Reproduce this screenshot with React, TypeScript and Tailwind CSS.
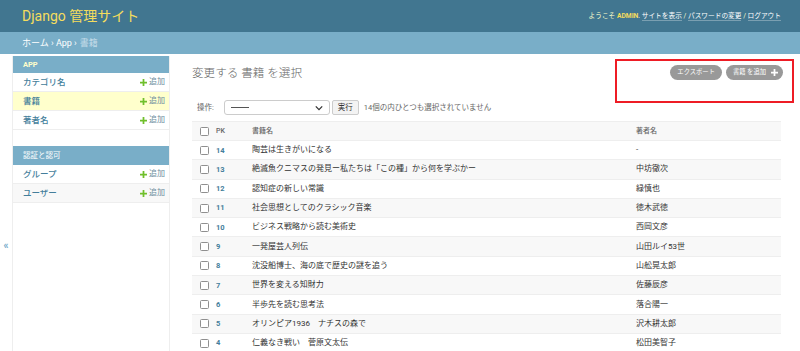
import React from 'react';

const books = [
  { pk: 14, title: '陶芸は生きがいになる', author: '-' },
  { pk: 13, title: '絶滅魚クニマスの発見ー私たちは「この種」から何を学ぶかー', author: '中坊徹次' },
  { pk: 12, title: '認知症の新しい常識', author: '緑慎也' },
  { pk: 11, title: '社会思想としてのクラシック音楽', author: '徳木武徳' },
  { pk: 10, title: 'ビジネス戦略から読む美術史', author: '西岡文彦' },
  { pk: 9, title: '一発屋芸人列伝', author: '山田ルイ53世' },
  { pk: 8, title: '沈没船博士、海の底で歴史の謎を追う', author: '山舩晃太郎' },
  { pk: 7, title: '世界を変える知財力', author: '佐藤辰彦' },
  { pk: 6, title: '半歩先を読む思考法', author: '落合陽一' },
  { pk: 5, title: 'オリンピア1936　ナチスの森で', author: '沢木耕太郎' },
  { pk: 4, title: '仁義なき戦い　菅原文太伝', author: '松田美智子' },
];

const font = { fontFamily: 'Roboto, "Noto Sans CJK JP", sans-serif' };

const GreenPlus = () => (
  <svg width="7" height="7" viewBox="0 0 8 8" className="mr-[2px]">
    <path d="M3 0h2v3h3v2H5v3H3V5H0V3h3z" fill="#70bf2b" />
  </svg>
);

const Checkbox = () => (
  <span className="inline-block w-[9px] h-[9px] border border-[#8f8f8f] rounded-[1.5px] bg-white" />
);

const SidebarRow = ({ label, active, alt }: { label: string; active?: boolean; alt?: boolean }) => (
  <div
    className={`h-[19px] flex items-center justify-between pl-[10px] pr-[4px] border-b border-[#eee] ${
      active ? 'bg-[#ffffcc]' : alt ? 'bg-[#f8f8f8]' : 'bg-white'
    }`}
  >
    <span className="text-[8.5px] text-[#447e9b] font-medium">{label}</span>
    <span className="flex items-center text-[8px] text-[#6d8ea0]">
      <GreenPlus />
      追加
    </span>
  </div>
);

export default function App() {
  return (
    <div className="w-[800px] h-[351px] overflow-hidden bg-white relative" style={font}>
      {/* header */}
      <div className="h-[32px] bg-[#417690] flex items-center justify-between pl-[22px] pr-[19px]">
        <span className="text-[14px] text-[#f5dd5d] leading-none">Django 管理サイト</span>
        <span className="text-[6.7px] text-[#ffc] leading-none">
          ようこそ <b className="text-[#f5dd5d]">ADMIN</b>.{' '}
          <span className="text-white border-b border-white/30">サイトを表示</span> /{' '}
          <span className="text-white border-b border-white/30">パスワードの変更</span> /{' '}
          <span className="text-white border-b border-white/30">ログアウト</span>
        </span>
      </div>

      {/* breadcrumbs */}
      <div className="h-[22px] bg-[#79aec8] flex items-center pl-[22px] text-[9px] text-white leading-none">
        ホーム › App › <span className="ml-[3px] text-[#c4dce8]">書籍</span>
      </div>

      <div className="flex h-[297px] pt-[2px]">
        {/* sidebar toggle */}
        <div className="w-[12px] flex justify-center pt-[185px]">
          <span className="text-[10px] font-bold text-[#70a7c8] leading-none">«</span>
        </div>

        {/* sidebar */}
        <div className="w-[158px] border-l border-r border-[#eee]">
          <div className="mb-[16px]">
            <div className="h-[17px] bg-[#79aec8] flex items-center pl-[10px] text-[7.5px] font-bold text-[#ffffcc]">
              APP
            </div>
            <SidebarRow label="カテゴリ名" />
            <SidebarRow label="書籍" active />
            <SidebarRow label="著者名" />
          </div>
          <div>
            <div className="h-[19px] bg-[#79aec8] flex items-center pl-[10px] text-[7.5px] text-white">
              認証と認可
            </div>
            <SidebarRow label="グループ" />
            <SidebarRow label="ユーザー" alt />
          </div>
        </div>

        {/* content */}
        <div className="flex-1 pl-[22px] pr-[17px]">
          <div className="flex justify-between items-start h-[41px]">
            <h1 className="text-[11.6px] text-[#666] font-light pt-[12px] leading-none">変更する 書籍 を選択</h1>
            <div className="flex gap-[4px] pt-[9px]">
              <span className="h-[15px] px-[7px] rounded-full bg-[#999] text-white text-[6.3px] flex items-center">
                エクスポート
              </span>
              <span className="h-[15px] pl-[7px] pr-[5px] rounded-full bg-[#999] text-white text-[6.3px] flex items-center gap-[5px]">
                書籍 を追加
                <svg width="7" height="7" viewBox="0 0 8 8">
                  <path d="M3 0h2v3h3v2H5v3H3V5H0V3h3z" fill="#fff" />
                </svg>
              </span>
            </div>
          </div>

          {/* actions */}
          <div className="h-[24px] flex items-center text-[7.5px] text-[#666] pl-[5px] pb-[3px]">
            <span className="mr-[10px]">操作:</span>
            <div className="w-[106px] h-[15px] border border-[#ccc] rounded-[3px] flex items-center justify-between px-[6px]">
              <span className="w-[18px] h-px bg-[#555]" />
              <svg width="8" height="6" viewBox="0 0 10 6">
                <path d="M1 1l4 4 4-4" stroke="#333" strokeWidth="1.6" fill="none" />
              </svg>
            </div>
            <span className="ml-[2px] h-[15px] px-[5px] border border-[#ccc] rounded-[2px] bg-[#f3f3f3] text-[#333] flex items-center">
              実行
            </span>
            <span className="ml-[5px]">14個の内ひとつも選択されていません</span>
          </div>

          {/* table */}
          <div className="border-t border-[#eee] mr-[2px]">
            <div className="h-[19px] bg-[#f8f8f8] border-b border-[#eee] flex items-center text-[7px] text-[#666] font-medium">
              <div className="w-[24px] flex justify-center"><Checkbox /></div>
              <div className="w-[36px]">PK</div>
              <div className="w-[384px]">書籍名</div>
              <div>著者名</div>
            </div>
            {books.map((b, i) => (
              <div
                key={b.pk}
                className={`h-[19.3px] border-b border-[#eee] flex items-center text-[8px] text-[#333] ${
                  i % 2 === 1 ? 'bg-[#f8f8f8]' : 'bg-white'
                }`}
              >
                <div className="w-[24px] flex justify-center"><Checkbox /></div>
                <div className="w-[36px] font-bold text-[#447e9b] text-[7.5px]">{b.pk}</div>
                <div className="w-[384px]">{b.title}</div>
                <div>{b.author}</div>
              </div>
            ))}
          </div>
        </div>
      </div>

      {/* annotation box */}
      <div className="absolute left-[615px] top-[59px] w-[179px] h-[44px] border-2 border-[#ee1c25]" />
    </div>
  );
}
